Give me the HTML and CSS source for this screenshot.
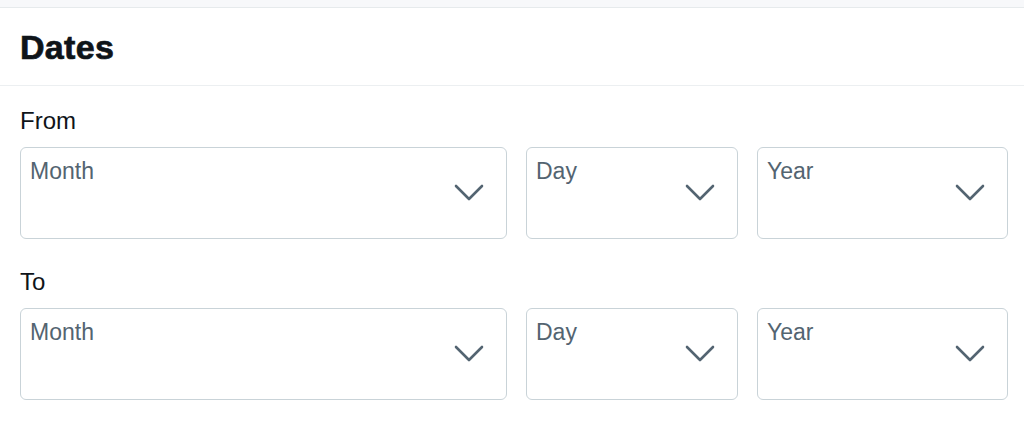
FILE: index.html
```html
<!DOCTYPE html>
<html lang="en">
<head>
<meta charset="utf-8">
<title>Dates</title>
<link rel="stylesheet" href="styles.css">
</head>
<body>
<div class="topbar"></div>
<header class="header"><h2 class="title">Dates</h2></header>
<main class="content">
  <section class="group">
    <div class="group-label">From</div>
    <div class="row">
      <div class="select">
        <span class="placeholder">Month</span>
        <svg class="chev" viewBox="0 0 30 18" width="30" height="18"><path d="M2 2 L15 15 L28 2"/></svg>
      </div>
      <div class="select">
        <span class="placeholder">Day</span>
        <svg class="chev" viewBox="0 0 30 18" width="30" height="18"><path d="M2 2 L15 15 L28 2"/></svg>
      </div>
      <div class="select">
        <span class="placeholder">Year</span>
        <svg class="chev" viewBox="0 0 30 18" width="30" height="18"><path d="M2 2 L15 15 L28 2"/></svg>
      </div>
    </div>
  </section>
  <section class="group">
    <div class="group-label">To</div>
    <div class="row">
      <div class="select">
        <span class="placeholder">Month</span>
        <svg class="chev" viewBox="0 0 30 18" width="30" height="18"><path d="M2 2 L15 15 L28 2"/></svg>
      </div>
      <div class="select">
        <span class="placeholder">Day</span>
        <svg class="chev" viewBox="0 0 30 18" width="30" height="18"><path d="M2 2 L15 15 L28 2"/></svg>
      </div>
      <div class="select">
        <span class="placeholder">Year</span>
        <svg class="chev" viewBox="0 0 30 18" width="30" height="18"><path d="M2 2 L15 15 L28 2"/></svg>
      </div>
    </div>
  </section>
</main>
</body>
</html>
```

FILE: styles.css
```css
* { box-sizing: border-box; }
html, body {
  margin: 0;
  padding: 0;
  background: #ffffff;
  font-family: "Liberation Sans", Arial, sans-serif;
  color: #0f1419;
}
.topbar {
  height: 8px;
  background: #f7f8fa;
  border-bottom: 1px solid #e6eaec;
}
.header {
  height: 78px;
  display: flex;
  align-items: center;
  padding-left: 20px;
  border-bottom: 1px solid #eceff1;
}
.title {
  margin: 0;
  font-size: 34px;
  font-weight: 700;
  line-height: 40px;
  color: #0f1419;
  padding-top: 1px;
  letter-spacing: 0.3px;
  -webkit-text-stroke: 0.7px #0f1419;
}
.content {
  padding: 21px 16px 0 20px;
}
.group + .group {
  margin-top: 29px;
}
.group-label {
  font-size: 24px;
  line-height: 28px;
  margin-bottom: 12px;
  color: #0f1419;
}
.row {
  display: grid;
  grid-template-columns: 487px 212px 251px;
  column-gap: 19px;
}
.select {
  height: 92px;
  border: 1px solid #c9d3d8;
  border-radius: 6px;
  display: flex;
  align-items: flex-start;
  padding: 10px 22px 0 9px;
}
.placeholder {
  flex: 1;
  font-size: 23px;
  line-height: 26px;
  color: #536471;
}
.chev {
  align-self: center;
  margin-top: -10px;
  fill: none;
  stroke: #536471;
  stroke-width: 2.6;
  stroke-linecap: round;
  stroke-linejoin: round;
}
```
